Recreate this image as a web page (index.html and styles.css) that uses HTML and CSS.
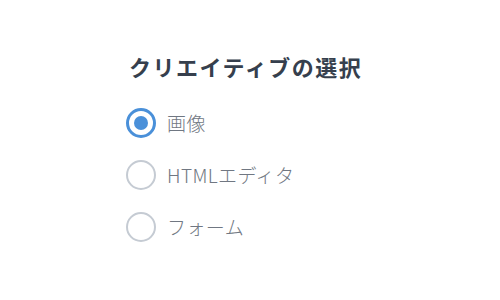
FILE: index.html
```html
<!DOCTYPE html>
<html lang="ja">
<head>
<meta charset="utf-8">
<link rel="stylesheet" href="styles.css">
</head>
<body>
<div class="panel">
  <h2 class="title">クリエイティブの選択</h2>
  <div class="options">
    <label class="option">
      <span class="radio radio--checked"></span>
      <span class="label">画像</span>
    </label>
    <label class="option">
      <span class="radio"></span>
      <span class="label">HTMLエディタ</span>
    </label>
    <label class="option">
      <span class="radio"></span>
      <span class="label">フォーム</span>
    </label>
  </div>
</div>
</body>
</html>
```

FILE: styles.css
```css
html, body {
  margin: 0;
  padding: 0;
  background: #ffffff;
}
body {
  width: 500px;
  height: 300px;
  font-family: "Noto Sans CJK JP", "Noto Sans", sans-serif;
}
.panel {
  padding: 50px 0 0 126px;
  display: flex;
  flex-direction: column;
}
.title {
  margin: 0 0 0 3px;
  font-size: 22px;
  font-weight: 700;
  letter-spacing: 1.5px;
  line-height: 32px;
  color: #363f4d;
}
.options {
  margin-top: 26px;
  display: flex;
  flex-direction: column;
  gap: 22px;
}
.option {
  display: flex;
  align-items: center;
  gap: 11px;
  height: 30px;
}
.radio {
  box-sizing: border-box;
  flex: none;
  width: 30px;
  height: 30px;
  border-radius: 50%;
  border: 2.5px solid #c5cbd3;
  background: #fff;
  position: relative;
}
.radio--checked {
  border: 3.5px solid #4a90d9;
}
.radio--checked::after {
  content: "";
  position: absolute;
  left: 4.5px;
  top: 4.5px;
  width: 14px;
  height: 14px;
  border-radius: 50%;
  background: #4a90d9;
}
.label {
  font-size: 19px;
  font-weight: 300;
  letter-spacing: 0.4px;
  color: #707782;
  line-height: 30px;
}
```
